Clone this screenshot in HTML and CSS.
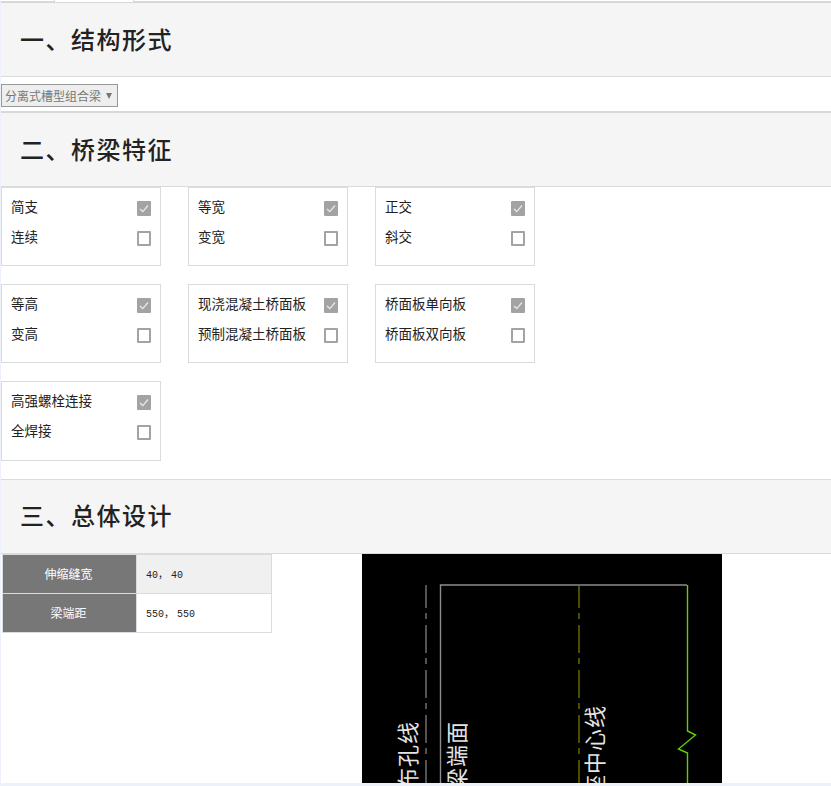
FILE: index.html
```html
<!DOCTYPE html>
<html lang="zh-CN">
<head>
  <meta charset="UTF-8">
  <title>桥梁设计</title>
  <link rel="stylesheet" href="styles.css">
</head>
<body>

  <div class="tabs"><span class="tab"></span></div>

  <h2 class="section-title">一、结构形式</h2>
  <div class="type-row">
    <div class="fake-select">分离式槽型组合梁<span class="arrow"></span></div>
  </div>

  <h2 class="section-title">二、桥梁特征</h2>
  <div class="options">
    <div class="option-box">
      <div class="option-row"><span class="label">简支</span><span class="check checked"><svg viewBox="0 0 14 15"><path d="M3 8l2.8 2.600L11 4.500"/></svg></span></div>
      <div class="option-row"><span class="label">连续</span><span class="check"></span></div>
    </div>
    <div class="option-box">
      <div class="option-row"><span class="label">等宽</span><span class="check checked"><svg viewBox="0 0 14 15"><path d="M3 8l2.8 2.600L11 4.500"/></svg></span></div>
      <div class="option-row"><span class="label">变宽</span><span class="check"></span></div>
    </div>
    <div class="option-box">
      <div class="option-row"><span class="label">正交</span><span class="check checked"><svg viewBox="0 0 14 15"><path d="M3 8l2.8 2.600L11 4.500"/></svg></span></div>
      <div class="option-row"><span class="label">斜交</span><span class="check"></span></div>
    </div>
    <div class="option-box">
      <div class="option-row"><span class="label">等高</span><span class="check checked"><svg viewBox="0 0 14 15"><path d="M3 8l2.8 2.600L11 4.500"/></svg></span></div>
      <div class="option-row"><span class="label">变高</span><span class="check"></span></div>
    </div>
    <div class="option-box">
      <div class="option-row"><span class="label">现浇混凝土桥面板</span><span class="check checked"><svg viewBox="0 0 14 15"><path d="M3 8l2.8 2.600L11 4.500"/></svg></span></div>
      <div class="option-row"><span class="label">预制混凝土桥面板</span><span class="check"></span></div>
    </div>
    <div class="option-box">
      <div class="option-row"><span class="label">桥面板单向板</span><span class="check checked"><svg viewBox="0 0 14 15"><path d="M3 8l2.8 2.600L11 4.500"/></svg></span></div>
      <div class="option-row"><span class="label">桥面板双向板</span><span class="check"></span></div>
    </div>
    <div class="option-box tall">
      <div class="option-row"><span class="label">高强螺栓连接</span><span class="check checked"><svg viewBox="0 0 14 15"><path d="M3 8l2.8 2.600L11 4.500"/></svg></span></div>
      <div class="option-row"><span class="label">全焊接</span><span class="check"></span></div>
    </div>
  </div>

  <h2 class="section-title section-three">三、总体设计</h2>
  <div class="design">
    <table class="params">
      <tr class="odd"><th>伸缩缝宽</th><td>40， 40</td></tr>
      <tr><th>梁端距</th><td>550， 550</td></tr>
    </table>
    <div class="drawing">
      <svg viewBox="0 0 360 229" width="360" height="229">
        <path d="M64 31V229" stroke="#a6a6a6" fill="none" stroke-dasharray="28 5 6 6" stroke-dashoffset="5"/>
        <path d="M78.500 229V31H325" stroke="#8c8c8c" stroke-width="1.4" fill="none"/>
        <path d="M217 31V229" stroke="#6e6e00" stroke-width="1.4" fill="none" stroke-dasharray="28 5 6 6" stroke-dashoffset="5"/>
        <path d="M325.500 31V177L333.500 181 316.500 195 325.500 199V229" stroke="#5fd000" stroke-width="1.400" fill="none"/>
        <text class="cad-text" transform="translate(53.500 236) rotate(-90)">布孔线</text>
        <text class="cad-text" transform="translate(103 236) rotate(-90)">梁端面</text>
        <text class="cad-text" transform="translate(241 243) rotate(-90)">座中心线</text>
      </svg>
    </div>
  </div>

</body>
</html>
```

FILE: styles.css
```css
html {
  background-color: #edf2fa;
}
body {
  font-family: "Liberation Sans", "Noto Sans CJK SC", sans-serif;
  margin: 0;
  margin-left: 1px;
  height: 783px;
  overflow: hidden;
  background-color: #fff;
  color: #222;
}
.tabs {
  height: 1px;
  background-color: #fff;
  border-bottom: 2px solid #d8d8d8;
  padding-left: 53px;
}
.tab {
  display: block;
  width: 78px;
  height: 2px;
  background-color: #fff;
  border-left: 1px solid #d8d8d8;
  border-right: 1px solid #d8d8d8;
}
.section-title {
  margin: 0;
  height: 73px;
  line-height: 72px;
  padding-left: 19px;
  font-family: "Noto Sans CJK SC", serif;
  font-size: 24px;
  font-weight: 500;
  letter-spacing: 1.500px;
  background-color: #f5f5f5;
  border-bottom: 1px solid #d8dce0;
}
.type-row {
  height: 36px;
  padding-top: 7px;
  box-sizing: border-box;
  border-bottom: 2px solid #d8d8d8;
}
.fake-select {
  display: flex;
  align-items: center;
  justify-content: space-between;
  width: 117px;
  height: 23px;
  box-sizing: border-box;
  padding: 0 5px 0 3px;
  border: 1px solid #999;
  background-color: #eee;
  color: #777;
  font-size: 12px;
}
.arrow {
  width: 0;
  height: 0;
  border-left: 3px solid transparent;
  border-right: 3px solid transparent;
  border-top: 6px solid #777;
}
.options {
  display: grid;
  grid-template-columns: repeat(3, 160px);
  column-gap: 27px;
  row-gap: 18px;
  height: 292px;
  align-content: start;
}
.option-box {
  height: 79px;
  box-sizing: border-box;
  padding: 5px 9px 0 9px;
  border: 1px solid #d8dce0;
  font-size: 13.500px;
}
.option-box.tall {
  height: 80px;
}
.option-row {
  display: flex;
  align-items: center;
  justify-content: space-between;
  height: 30px;
}
.label {
  margin-bottom: 4px;
}
.check {
  width: 14px;
  height: 15px;
  box-sizing: border-box;
  border: 2px solid #a3a3a3;
  border-radius: 1px;
}
.check.checked {
  background-color: #a3a3a3;
  border: 0;
}
.check svg {
  display: block;
  width: 14px;
  height: 15px;
  fill: none;
  stroke: #e8e8e8;
  stroke-width: 1.300;
}
.section-three {
  line-height: 70px;
  border-top: 1px solid #d8dce0;
}
.design {
  display: flex;
  align-items: flex-start;
}
.params {
  margin: 0 0 0 1px;
  width: 270px;
  height: 79px;
  border-collapse: collapse;
  font-size: 12px;
}
.params th, .params td {
  box-sizing: border-box;
  border: 1px solid #d8dce0;
  height: 39px;
  padding: 0 0 2px 0;
  font-weight: normal;
}
.params th {
  width: 134px;
  padding-right: 2px;
  background-color: #777;
  color: #fff;
}
.params td {
  padding-left: 9px;
  font-family: "Liberation Mono", "Noto Sans CJK SC", monospace;
  font-size: 10px;
  word-spacing: -3px;
  color: #222;
}
.params .odd td {
  background-color: #f0f0f0;
}
.drawing {
  margin-left: 90px;
  width: 360px;
  height: 229px;
  background-color: #000;
}
.drawing svg {
  display: block;
}
.cad-text {
  font-family: "Noto Sans CJK SC", sans-serif;
  font-size: 22px;
  letter-spacing: 1px;
  fill: #e4e4e4;
}
```
